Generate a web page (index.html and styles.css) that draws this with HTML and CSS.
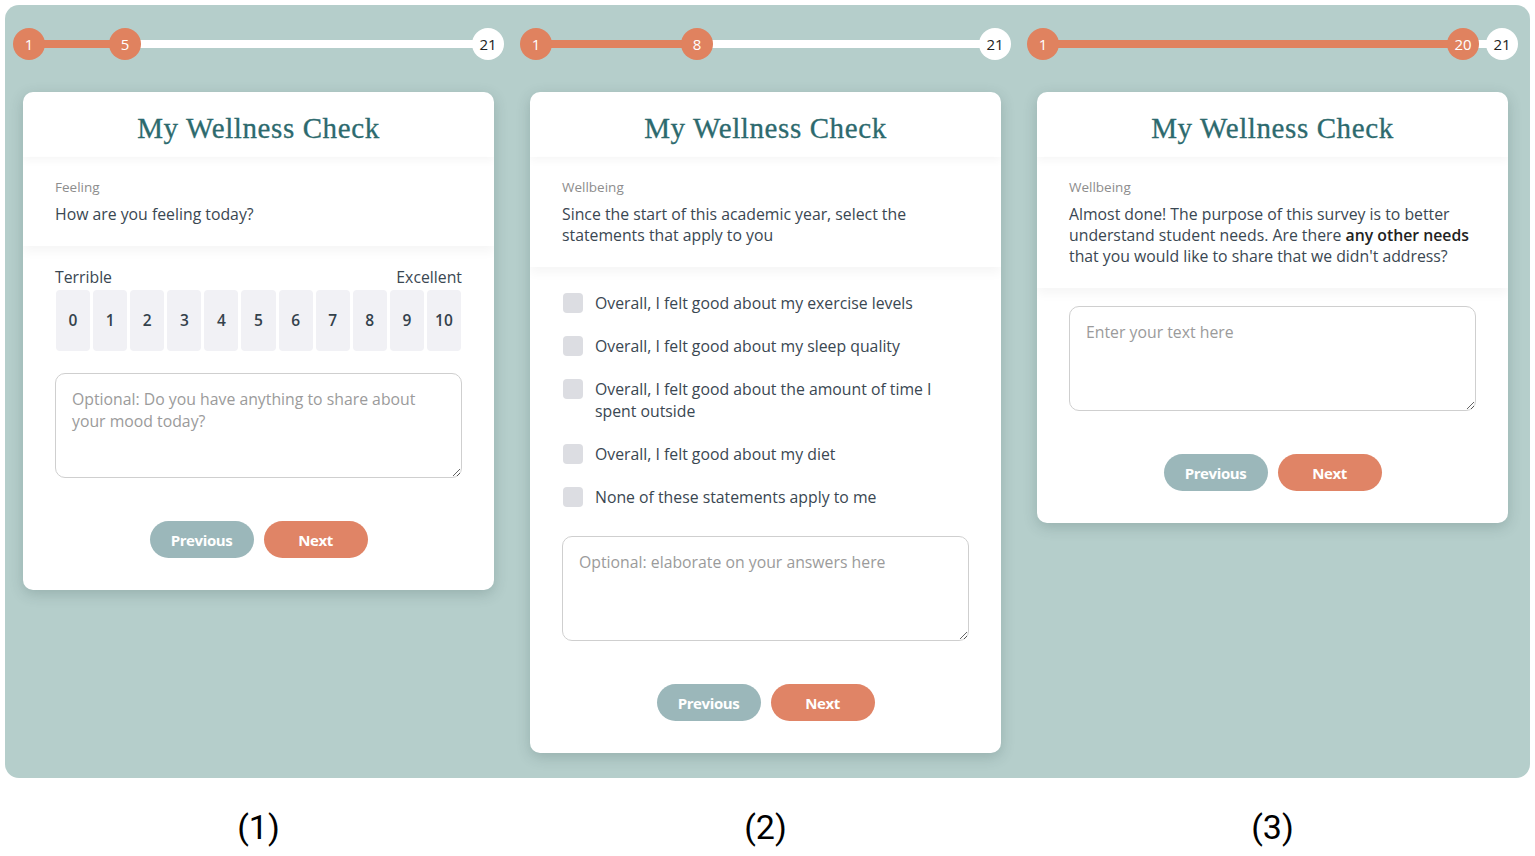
FILE: index.html
```html
<!DOCTYPE html>
<html>
<head lang="en">
    <meta charset="UTF-8">
    <title>My Wellness Check</title>
    <link rel="stylesheet" href="styles.css">
</head>
<body>
<div class="panel">
    <!-- step 5 -->
    <div class="column">
        <div class="progress">
            <div class="track">
                <div class="fill" style="width:20.9%"><span class="dot dot-current">5</span></div>
            </div>
            <span class="dot dot-start">1</span>
            <span class="dot dot-end">21</span>
        </div>
        <div class="card">
            <div class="card-head"><h1>My Wellness Check</h1></div>
            <div class="question">
                <div class="topic">Feeling</div>
                <p>How are you feeling today?</p>
            </div>
            <div class="answers">
                <div class="scale-labels"><span>Terrible</span><span>Excellent</span></div>
                <div class="scale">
                    <span>0</span><span>1</span><span>2</span><span>3</span><span>4</span><span>5</span>
                    <span>6</span><span>7</span><span>8</span><span>9</span><span>10</span>
                </div>
                <textarea class="note" placeholder="Optional: Do you have anything to share about your mood today?"></textarea>
                <div class="buttons">
                    <button class="btn btn-prev">Previous</button>
                    <button class="btn btn-next">Next</button>
                </div>
            </div>
        </div>
    </div>
    <!-- step 8 -->
    <div class="column">
        <div class="progress">
            <div class="track">
                <div class="fill" style="width:35.1%"><span class="dot dot-current">8</span></div>
            </div>
            <span class="dot dot-start">1</span>
            <span class="dot dot-end">21</span>
        </div>
        <div class="card">
            <div class="card-head"><h1>My Wellness Check</h1></div>
            <div class="question">
                <div class="topic">Wellbeing</div>
                <p>Since the start of this academic year, select the statements that apply to you</p>
            </div>
            <div class="answers">
                <ul class="checklist">
                    <li><i class="box"></i><span>Overall, I felt good about my exercise levels</span></li>
                    <li><i class="box"></i><span>Overall, I felt good about my sleep quality</span></li>
                    <li><i class="box"></i><span>Overall, I felt good about the amount of time I spent outside</span></li>
                    <li><i class="box"></i><span>Overall, I felt good about my diet</span></li>
                    <li><i class="box"></i><span>None of these statements apply to me</span></li>
                </ul>
                <textarea class="note" placeholder="Optional: elaborate on your answers here"></textarea>
                <div class="buttons">
                    <button class="btn btn-prev">Previous</button>
                    <button class="btn btn-next">Next</button>
                </div>
            </div>
        </div>
    </div>
    <!-- step 20 -->
    <div class="column">
        <div class="progress">
            <div class="track">
                <div class="fill" style="width:91.5%"><span class="dot dot-current">20</span></div>
            </div>
            <span class="dot dot-start">1</span>
            <span class="dot dot-end">21</span>
        </div>
        <div class="card">
            <div class="card-head"><h1>My Wellness Check</h1></div>
            <div class="question">
                <div class="topic">Wellbeing</div>
                <p>Almost done! The purpose of this survey is to better understand student needs. Are there <b>any other needs</b> that you would like to share that we didn't address?</p>
            </div>
            <div class="answers">
                <textarea class="note first" placeholder="Enter your text here"></textarea>
                <div class="buttons">
                    <button class="btn btn-prev">Previous</button>
                    <button class="btn btn-next">Next</button>
                </div>
            </div>
        </div>
    </div>
</div>
<div class="captions">
    <span>(1)</span>
    <span>(2)</span>
    <span>(3)</span>
</div>
</body>
</html>
```

FILE: styles.css
```css
*{
    margin: 0;
    padding: 0;
    box-sizing: border-box;
}
body{
    background-color: white;
    font-family: "Open Sans", Lato, sans-serif;
    color: #3a4752;
}
.panel{
    margin: 5px 5px 0;
    padding: 23px 8px 25px 8px;
    background-color: #b5cecb;
    border-radius: 14px;
    display: grid;
    grid-template-columns: repeat(3, 491px);
    column-gap: 16px;
    align-items: start;
}
/* progress bar */
.progress{
    position: relative;
    height: 32px;
}
.track{
    position: absolute;
    left: 16px;
    right: 16px;
    top: 12px;
    height: 8px;
    background-color: white;
}
.fill{
    position: relative;
    height: 100%;
    background-color: #e0825f;
}
.dot{
    position: absolute;
    width: 32px;
    height: 32px;
    border-radius: 50%;
    background-color: #e0825f;
    color: white;
    font: 15px/32px "Open Sans", sans-serif;
    text-align: center;
}
.dot-start{
    left: 0;
    top: 0;
}
.dot-end{
    right: 0;
    top: 0;
    background-color: white;
    color: #222;
}
.dot-current{
    right: -16px;
    top: -12px;
    z-index: 2;
}
/* card */
.card{
    margin: 32px 10px 0;
    background-color: white;
    border-radius: 10px;
    box-shadow: 0 4px 14px rgba(40, 70, 70, 0.22);
    overflow: hidden;
}
.card-head{
    position: relative;
    z-index: 2;
    padding: 18px 0 11px;
    text-align: center;
    box-shadow: 0 4px 8px rgba(0, 0, 0, 0.035);
}
.card-head h1{
    font: normal 29px/36px "Liberation Serif", "DejaVu Serif", serif;
    letter-spacing: 0.6px;
    color: #2d6a6e;
    -webkit-text-stroke: 0.3px #2d6a6e;
}
.question{
    position: relative;
    z-index: 1;
    padding: 22px 32px 21px;
    box-shadow: 0 6px 10px rgba(0, 0, 0, 0.04);
}
.topic{
    font-size: 13.5px;
    line-height: 16px;
    color: #8d8d8d;
}
.question p{
    margin-top: 9px;
    font-size: 15.8px;
    line-height: 21px;
}
.question b{
    font-weight: 600;
    color: #222;
}
.answers{
    padding: 18px 32px 32px;
}
.scale-labels{
    display: flex;
    justify-content: space-between;
    font-size: 15.8px;
    line-height: 22px;
    padding-top: 2px;
}
.scale{
    display: flex;
    gap: 3px;
    margin-top: 2px;
    padding: 0 1px;
}
.scale span{
    flex: 1;
    height: 61px;
    background-color: #f1f1f5;
    border-radius: 4px;
    font: 600 15.5px/61px "Open Sans", sans-serif;
    text-align: center;
    color: #34424c;
}
.checklist{
    list-style: none;
    padding-top: 7px;
    padding-bottom: 6px;
    display: flex;
    flex-direction: column;
    gap: 21px;
}
.checklist li{
    display: flex;
    align-items: flex-start;
    gap: 12px;
    font-size: 15.8px;
    line-height: 22px;
    padding-left: 1px;
}
.checklist .box{
    flex: none;
    width: 20px;
    height: 20px;
    margin-top: 1px;
    background-color: #dcdde2;
    border-radius: 4px;
}
.note{
    display: block;
    width: 100%;
    height: 105px;
    margin-top: 22px;
    padding: 14px 16px;
    border: 1px solid #cfcfcf;
    border-radius: 10px;
    font: 15.8px/22px "Open Sans", sans-serif;
    color: #3a4752;
    outline: none;
}
.note.first{
    margin-top: 0;
}
.note::placeholder{
    color: #9b9b9b;
}
.buttons{
    display: flex;
    justify-content: center;
    gap: 10px;
    margin-top: 43px;
}
.btn{
    width: 104px;
    height: 37px;
    border: none;
    border-radius: 19px;
    color: white;
    font: bold 15px "Open Sans", sans-serif;
    letter-spacing: -0.4px;
    cursor: pointer;
}
.btn-prev{
    background-color: #9bb7ba;
}
.btn-next{
    background-color: #e08466;
}
/* captions */
.captions{
    display: grid;
    grid-template-columns: repeat(3, 491px);
    column-gap: 16px;
    padding: 0 13px;
    margin-top: 29px;
    text-align: center;
    font: 34px/40px Roboto, "Liberation Sans", sans-serif;
    color: black;
}
```
